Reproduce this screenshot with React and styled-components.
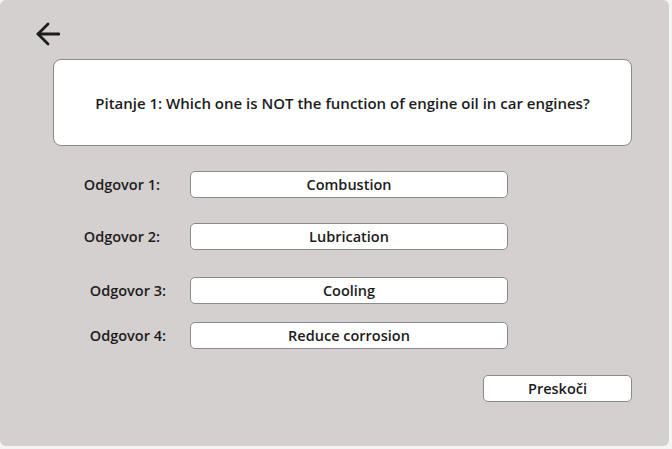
import React from 'react';
import styled, {createGlobalStyle} from 'styled-components';

const GlobalStyle = createGlobalStyle`
  html, body {
    margin: 0;
    padding: 0;
    background: #f4f4f4;
  }
  body {
    font-family: 'Open Sans', 'Liberation Sans', sans-serif;
    color: #1c1c1c;
  }
`;

const Panel = styled.div`
  width: 669px;
  height: 446px;
  box-sizing: border-box;
  background: #d4d0cf;
  border-radius: 6px;
  display: flex;
  flex-direction: column;
  padding: 22px 0 0 0;
`;

const BackButton = styled.button`
  all: unset;
  margin-left: 36px;
  width: 24px;
  height: 24px;
  display: flex;
  cursor: pointer;
`;

const QuestionCard = styled.div`
  margin: 13px 0 0 53px;
  width: 579px;
  height: 87px;
  box-sizing: border-box;
  background: #fff;
  border: 1px solid #8a8a8a;
  border-radius: 8px;
  display: flex;
  align-items: center;
  justify-content: center;
  font-size: 15px;
  font-weight: 600;
`;

const Answers = styled.div`
  display: flex;
  flex-direction: column;
`;

const AnswerRow = styled.div`
  display: grid;
  grid-template-columns: 190px 318px;
  align-items: center;
  margin-top: ${props => props.top}px;
`;

const Label = styled.div`
  text-align: right;
  padding-right: ${props => props.pad}px;
  font-size: 14.5px;
  font-weight: 600;
`;

const AnswerButton = styled.button`
  height: 27px;
  box-sizing: border-box;
  background: #fff;
  border: 1px solid #8a8a8a;
  border-radius: 5px;
  font-family: inherit;
  font-size: 14.5px;
  font-weight: 600;
  color: #1c1c1c;
  padding: 0;
  cursor: pointer;
`;

const Footer = styled.div`
  display: flex;
  justify-content: flex-end;
  padding-right: 37px;
  margin-top: 26px;
`;

const SkipButton = styled(AnswerButton)`
  width: 149px;
`;

const answers = [
  {label: 'Odgovor 1:', text: 'Combustion', top: 25, pad: 30},
  {label: 'Odgovor 2:', text: 'Lubrication', top: 25, pad: 30},
  {label: 'Odgovor 3:', text: 'Cooling', top: 27, pad: 24},
  {label: 'Odgovor 4:', text: 'Reduce corrosion', top: 18, pad: 24},
];

const ArrowLeft = () => (
  <svg width="24" height="24" viewBox="0 0 24 24" fill="none"
    stroke="#1c1c1c" strokeWidth="2.8" strokeLinecap="round" strokeLinejoin="round">
    <path d="M23 12H2" />
    <path d="M12 2 2 12l10 10" />
  </svg>
);

export default function App() {
  return (
    <>
      <GlobalStyle />
      <Panel>
        <BackButton aria-label="Natrag">
          <ArrowLeft />
        </BackButton>
        <QuestionCard>
          Pitanje 1: Which one is NOT the function of engine oil in car engines?
        </QuestionCard>
        <Answers>
          {answers.map(a => (
            <AnswerRow key={a.label} top={a.top}>
              <Label pad={a.pad}>{a.label}</Label>
              <AnswerButton>{a.text}</AnswerButton>
            </AnswerRow>
          ))}
        </Answers>
        <Footer>
          <SkipButton>Preskoči</SkipButton>
        </Footer>
      </Panel>
    </>
  );
}
